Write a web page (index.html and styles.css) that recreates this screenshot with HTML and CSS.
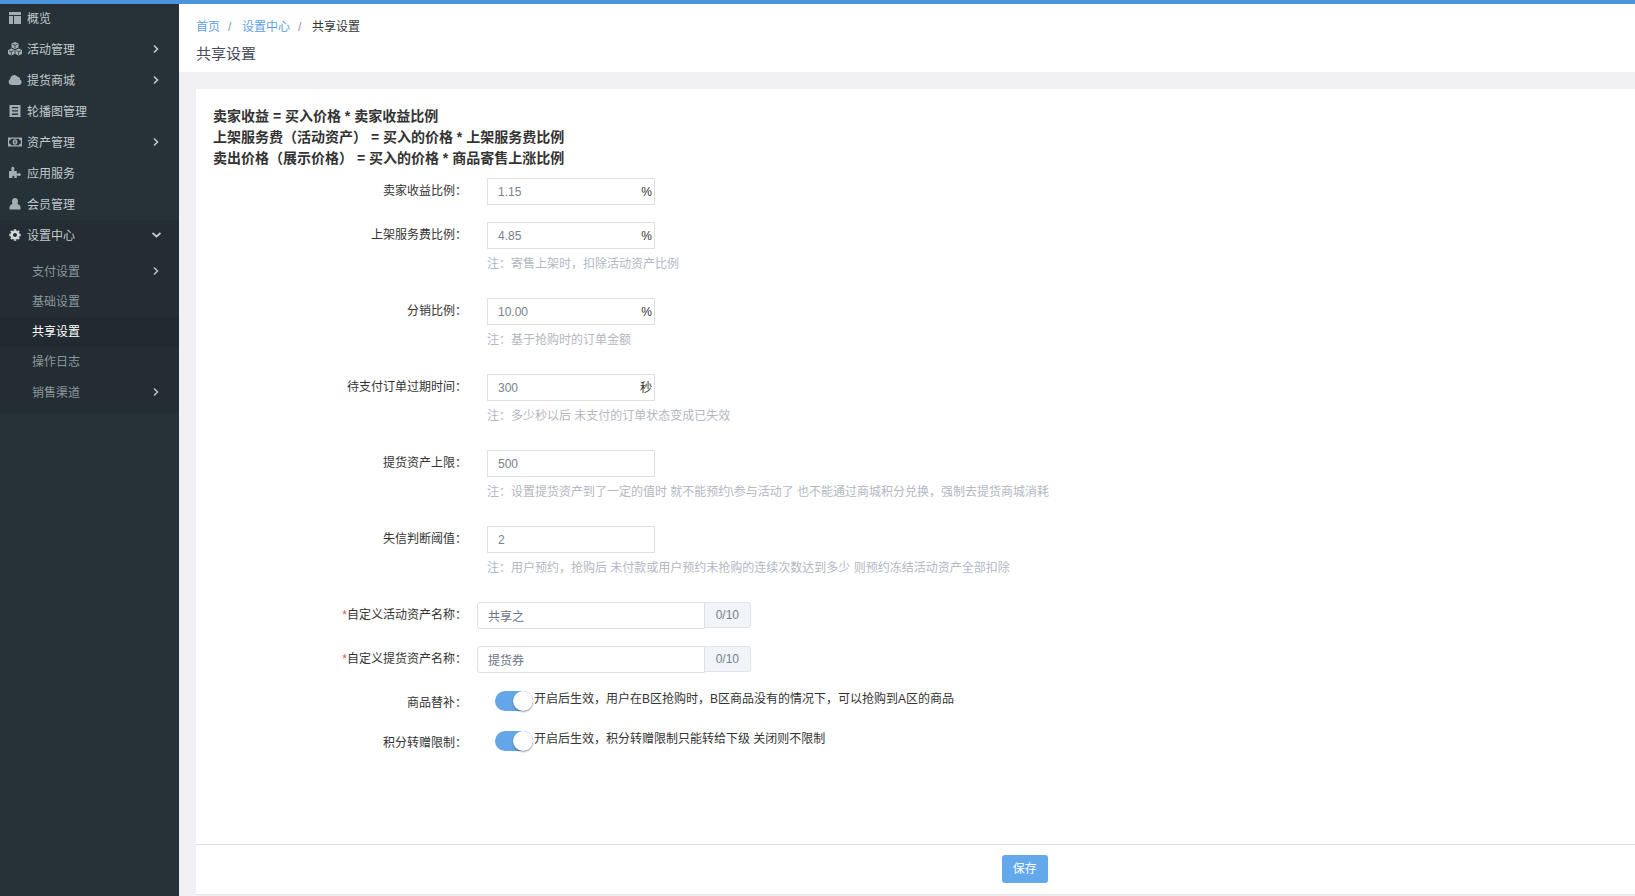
FILE: index.html
```html
<!DOCTYPE html>
<html lang="zh-CN">
<head>
    <meta charset="UTF-8">
    <meta name="viewport" content="width=device-width, initial-scale=1.0">
    <title>共享设置</title>
    <link rel="stylesheet" href="styles.css">
</head>
<body>
    <svg class="sprite" aria-hidden="true">
        <symbol id="right" viewBox="0 0 12 12"><path d="M4 2.500L7.500 6 4 9.500" fill="none" stroke="currentColor" stroke-width="1.600"/></symbol>
        <symbol id="down" viewBox="0 0 12 12"><path d="M2.500 4L6.500 7.500 10.500 4" fill="none" stroke="currentColor" stroke-width="1.800"/></symbol>
    </svg>
    <div class="layout">
        <nav class="sidebar">
            <ul class="menu">
                <li class="first"><a href="#">
                    <svg class="icon" viewBox="0 0 14 14"><path d="M1 1h12v3H1zM1 5h4v8H1zM6 5h7v8H6z"/></svg>
                    <span>概览</span>
                </a></li>
                <li><a href="#">
                    <svg class="icon" viewBox="0 0 14 14"><path d="M7 0l3.500 1.500v4L7 7 3.500 5.500v-4zM3.300 6.500L6.600 8v4l-3.300 1.500L0 12V8zM10.700 6.500L14 8v4l-3.300 1.500L7.400 12V8z"/><path d="M4.500 2.300L7 3.300l2.500-1M7 3.300V6M1 8.700l2.300 1 2.300-1M3.300 9.700v3M8.400 8.700l2.300 1 2.300-1M10.700 9.700v3" fill="none" stroke="#263238" stroke-width=".8"/></svg>
                    <span>活动管理</span>
                    <svg class="arrow"><use href="#right"/></svg>
                </a></li>
                <li><a href="#">
                    <svg class="icon" viewBox="0 0 14 14"><path d="M3.500 12A3.300 3.300 0 0 1 2.200 5.900 4 4 0 0 1 9.500 3.800 2.600 2.600 0 0 1 12 6.500 2.900 2.900 0 0 1 11.200 12z"/></svg>
                    <span>提货商城</span>
                    <svg class="arrow"><use href="#right"/></svg>
                </a></li>
                <li><a href="#">
                    <svg class="icon" viewBox="0 0 14 14"><path fill-rule="evenodd" d="M1.500 1h11v12h-11zM4 3v1.300h6V3zM4 6.300v1.300h6V6.300zM4 9.600v1.300h6V9.600z"/></svg>
                    <span>轮播图管理</span>
                </a></li>
                <li><a href="#">
                    <svg class="icon" viewBox="0 0 14 14"><path fill-rule="evenodd" d="M0 2.500h14v9H0zM3 3.700A2 2 0 0 1 1.200 5.500v3A2 2 0 0 1 3 10.300h8a2 2 0 0 1 1.800-1.800v-3A2 2 0 0 1 11 3.700z"/><path fill-rule="evenodd" d="M7 4.200a2.300 2.800 0 0 1 0 5.600 2.300 2.800 0 0 1 0-5.600zM6.500 5.500v3h1v-3z"/></svg>
                    <span>资产管理</span>
                    <svg class="arrow"><use href="#right"/></svg>
                </a></li>
                <li><a href="#">
                    <svg class="icon" viewBox="0 0 14 14"><path d="M1 5h2.800L3.300 3a1.600 1.600 0 1 1 3 0L5.800 5h3v2.800l1.700-.5a1.500 1.500 0 1 1 0 2.500l-1.700-.3V12H6.300l.2-1.500a1.200 1.200 0 0 0-2.200 0l.2 1.500H1z"/></svg>
                    <span>应用服务</span>
                </a></li>
                <li><a href="#">
                    <svg class="icon" viewBox="0 0 14 14"><ellipse cx="7" cy="4.500" rx="3" ry="3.500"/><path d="M1.500 12.500V10Q1.700 7.500 4.500 7h5q2.800.5 3 3v2.500z"/></svg>
                    <span>会员管理</span>
                </a></li>
                <li class="open"><a href="#">
                    <svg class="icon" viewBox="0 0 14 14"><circle cx="7" cy="7" r="3.300" fill="none" stroke="currentColor" stroke-width="2.600"/><path d="M7 1.300v1.500M7 11.200v1.500M1.300 7h1.500M11.200 7h1.500M3 3l1 1M10 10l1 1M11 3l-1 1M4 10l-1 1" stroke="currentColor" stroke-width="2.400"/></svg>
                    <span>设置中心</span>
                    <svg class="arrow"><use href="#down"/></svg>
                </a>
                    <ul class="submenu">
                        <li class="parent"><a href="#"><span>支付设置</span><svg class="arrow"><use href="#right"/></svg></a></li>
                        <li><a href="#"><span>基础设置</span></a></li>
                        <li class="active"><a href="#"><span>共享设置</span></a></li>
                        <li><a href="#"><span>操作日志</span></a></li>
                        <li class="parent"><a href="#"><span>销售渠道</span><svg class="arrow"><use href="#right"/></svg></a></li>
                    </ul>
                </li>
            </ul>
        </nav>

        <main class="main">
            <header class="page-header">
                <div class="breadcrumb">
                    <a href="#">首页</a>
                    <i>/</i>
                    <a href="#">设置中心</a>
                    <i>/</i>
                    <span>共享设置</span>
                </div>
                <h1>共享设置</h1>
            </header>

            <form class="panel">
                <div class="panel-body">
                    <div class="intro">
                        <p>卖家收益 = 买入价格 * 卖家收益比例</p>
                        <p>上架服务费（活动资产） = 买入的价格 * 上架服务费比例</p>
                        <p>卖出价格（展示价格） = 买入的价格 * 商品寄售上涨比例</p>
                    </div>

                    <div class="row">
                        <label for="income">卖家收益比例：</label>
                        <div class="field">
                            <div class="box"><input id="income" type="text" value="1.15"><span>%</span></div>
                        </div>
                    </div>
                    <div class="row">
                        <label for="service">上架服务费比例：</label>
                        <div class="field">
                            <div class="box"><input id="service" type="text" value="4.85"><span>%</span></div>
                            <p class="hint">注：寄售上架时，扣除活动资产比例</p>
                        </div>
                    </div>
                    <div class="row">
                        <label for="share">分销比例：</label>
                        <div class="field">
                            <div class="box"><input id="share" type="text" value="10.00"><span>%</span></div>
                            <p class="hint">注：基于抢购时的订单金额</p>
                        </div>
                    </div>
                    <div class="row">
                        <label for="expire">待支付订单过期时间：</label>
                        <div class="field">
                            <div class="box"><input id="expire" type="text" value="300"><span>秒</span></div>
                            <p class="hint">注：多少秒以后 未支付的订单状态变成已失效</p>
                        </div>
                    </div>
                    <div class="row">
                        <label for="limit">提货资产上限：</label>
                        <div class="field">
                            <div class="box"><input id="limit" type="text" value="500"></div>
                            <p class="hint">注：设置提货资产到了一定的值时 就不能预约\参与活动了 也不能通过商城积分兑换，强制去提货商城消耗</p>
                        </div>
                    </div>
                    <div class="row">
                        <label for="threshold">失信判断阈值：</label>
                        <div class="field">
                            <div class="box"><input id="threshold" type="text" value="2"></div>
                            <p class="hint">注：用户预约，抢购后 未付款或用户预约未抢购的连续次数达到多少 则预约冻结活动资产全部扣除</p>
                        </div>
                    </div>
                    <div class="row name-row">
                        <label for="activityName"><em>*</em>自定义活动资产名称：</label>
                        <div class="group">
                            <input id="activityName" type="text" value="共享之">
                            <span class="addon">0/10</span>
                        </div>
                    </div>
                    <div class="row name-row">
                        <label for="goodsName"><em>*</em>自定义提货资产名称：</label>
                        <div class="group">
                            <input id="goodsName" type="text" value="提货券">
                            <span class="addon">0/10</span>
                        </div>
                    </div>
                    <div class="row switch-row">
                        <label for="substitute">商品替补：</label>
                        <input id="substitute" class="switch" type="checkbox" checked>
                        <span class="switch-text">开启后生效，用户在B区抢购时，B区商品没有的情况下，可以抢购到A区的商品</span>
                    </div>
                    <div class="row switch-row">
                        <label for="transfer">积分转赠限制：</label>
                        <input id="transfer" class="switch" type="checkbox" checked>
                        <span class="switch-text">开启后生效，积分转赠限制只能转给下级 关闭则不限制</span>
                    </div>
                </div>
                <div class="panel-footer">
                    <button type="button">保存</button>
                </div>
            </form>
        </main>
    </div>
</body>
</html>
```
FILE: styles.css
```css
* {
    box-sizing: border-box;
}
body {
    margin: 0;
    font-family: "Liberation Sans", "Noto Sans CJK SC", sans-serif;
    font-size: 12px;
    line-height: 18px;
    color: #333;
    background: #f0f0f4;
}
a {
    color: inherit;
    text-decoration: none;
}
p, h1, ul {
    margin: 0;
    padding: 0;
}
ul {
    list-style: none;
}
em, i {
    font-style: normal;
}
input, button {
    font: inherit;
}
.sprite {
    position: absolute;
    width: 0;
    height: 0;
}
.layout {
    display: flex;
    min-height: 100vh;
    border-top: 4px solid #4b93db;
}

/* sidebar */
.sidebar {
    flex: none;
    width: 179px;
    background: #263238;
    color: #c1c9cd;
}
.menu a {
    display: flex;
    align-items: center;
    height: 31px;
    padding: 0 17px 0 8px;
}
.menu .first a {
    height: 30px;
}
.icon {
    width: 14px;
    height: 14px;
    margin: 0 5px 2px 0;
    fill: currentColor;
    color: #a3adb2;
}
.arrow {
    width: 12px;
    height: 12px;
    margin: 0 0 2px auto;
}
.open {
    background: #232d33;
}
.open .icon {
    color: #d5dadc;
}
.submenu {
    padding: 5px 0;
    color: #8c979c;
}
.submenu a {
    height: 30px;
    padding-left: 32px;
}
.submenu .parent a {
    height: 31px;
}
.submenu .arrow {
    color: #b5bdc1;
}
.submenu .active {
    background: #222a31;
    color: #fff;
}

/* content */
.main {
    flex: 1;
    min-width: 0;
    display: flex;
    flex-direction: column;
}
.page-header {
    padding: 14px 17px 8px;
    background: #fff;
}
.breadcrumb {
    display: flex;
    color: #5e9fe4;
}
.breadcrumb i {
    width: 22px;
    padding-left: 8px;
    color: #8798ad;
}
.breadcrumb span {
    color: #333;
}
h1 {
    margin-top: 7px;
    font-size: 15px;
    font-weight: normal;
    line-height: 21px;
    color: #464c5b;
}
.panel {
    flex: 1;
    display: flex;
    flex-direction: column;
    margin: 17px 0 1px 17px;
    background: #fff;
    border-bottom: 1px solid #e3e3e8;
}
.panel-body {
    flex: 1;
    padding: 17px;
}
.intro {
    margin-bottom: 9px;
    font-size: 14px;
    font-weight: bold;
    line-height: 21px;
}
.row {
    display: flex;
    align-items: flex-start;
    margin-bottom: 17px;
}
.row label {
    flex: none;
    width: 254px;
    margin-right: 20px;
    line-height: 27px;
    text-align: right;
}
.row em {
    color: #e4574f;
}
.box {
    display: flex;
    align-items: center;
    width: 168px;
    height: 27px;
    padding-right: 2px;
    border: 1px solid #dde1e6;
}
.box input {
    flex: 1;
    min-width: 0;
    padding: 0 10px;
    border: 0;
    background: none;
    color: #7a818e;
}
.hint {
    margin: 6px 0 8px;
    color: #b3b7c2;
}
.row.name-row label {
    margin-right: 10px;
}
.group {
    display: flex;
    align-items: flex-start;
    width: 274px;
    height: 27px;
}
.group input {
    flex: 1;
    min-width: 0;
    height: 27px;
    padding: 0 10px;
    border: 1px solid #dde1e6;
    border-radius: 3px 0 0 3px;
    color: #6b7688;
}
.addon {
    padding: 0 11px;
    border: 1px solid #e0e5ea;
    border-left: 0;
    border-radius: 0 3px 3px 0;
    background: #f1f4f8;
    line-height: 24px;
    color: #76808c;
}
.row.switch-row {
    margin-bottom: 13px;
}
.switch-row label {
    margin-right: 28px;
}
.switch {
    flex: none;
    appearance: none;
    display: flex;
    justify-content: flex-end;
    width: 38px;
    height: 20px;
    margin: 1px 1px 0 0;
    border-radius: 10px;
    background: #64a6e8;
}
.switch::before {
    content: "";
    width: 20px;
    height: 20px;
    border-radius: 50%;
    background: #fff;
    box-shadow: 0 1px 2px rgba(0, 0, 0, .4);
}
.switch-text {
    line-height: 18px;
}
.panel-footer {
    padding: 10px 0 11px 56%;
    border-top: 1px solid #dcdde0;
}
button {
    display: block;
    height: 28px;
    padding: 0 11px;
    border: 0;
    border-radius: 3px;
    background: #64a8ec;
    color: #fff;
}
```
